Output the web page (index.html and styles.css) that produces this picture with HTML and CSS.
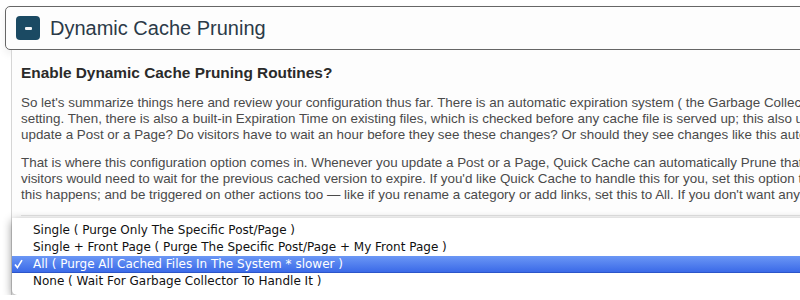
FILE: index.html
```html
<!DOCTYPE html>
<html lang="en">
<head>
    <meta charset="UTF-8">
    <title>Dynamic Cache Pruning</title>
    <link rel="stylesheet" href="styles.css">
</head>
<body>
    <div class="section">
        <div class="section-head">
            <span class="toggle"><span class="minus"></span></span>
            <span class="section-title">Dynamic Cache Pruning</span>
        </div>
        <div class="section-body">
            <h3>Enable Dynamic Cache Pruning Routines?</h3>
            <p>So let's summarize things here and review your configuration thus far. There is an automatic expiration system ( the Garbage Collector ) that runs<br>setting. Then, there is also a built-in Expiration Time on existing files, which is checked before any cache file is served up; this also uses your<br>update a Post or a Page? Do visitors have to wait an hour before they see these changes? Or should they see changes like this automatically?</p>
            <p>That is where this configuration option comes in. Whenever you update a Post or a Page, Quick Cache can automatically Prune that specific<br>visitors would need to wait for the previous cached version to expire. If you'd like Quick Cache to handle this for you, set this option to Single.<br>this happens; and be triggered on other actions too — like if you rename a category or add links, set this to All. If you don't want any of this</p>
            <hr>
            <ul class="select-menu">
                <li><span class="check"></span>Single ( Purge Only The Specific Post/Page )</li>
                <li><span class="check"></span>Single + Front Page ( Purge The Specific Post/Page + My Front Page )</li>
                <li class="selected"><span class="check"><svg width="9" height="10" viewBox="0 0 9 10"><path d="M1 5.6 L3.4 8.6 L8 1.2" fill="none" stroke="#fff" stroke-width="1.6"/></svg></span>All ( Purge All Cached Files In The System * slower )</li>
                <li><span class="check"></span>None ( Wait For Garbage Collector To Handle It )</li>
            </ul>
        </div>
    </div>
</body>
</html>
```

FILE: styles.css
```css
body{
    margin: 0;
    background: #fff;
    overflow: hidden;
    font-family: "Liberation Sans", Arial, sans-serif;
}

.section{
    width: 1100px;
    margin: 6px 0 0 5px;
}

.section-head{
    display: flex;
    align-items: center;
    gap: 10px;
    height: 42px;
    padding-left: 10px;
    background: #fdfdfd;
    border: 1px solid #666;
    border-radius: 5px;
    box-shadow: 0 4px 8px rgba(0,0,0,0.07);
}

.toggle{
    display: flex;
    align-items: center;
    justify-content: center;
    width: 24px;
    height: 24px;
    background: #1b4a63;
    border-radius: 4px;
}

.minus{
    width: 7px;
    height: 3px;
    background: #f2f4f6;
    border-radius: 1px;
}

.section-title{
    font-size: 20px;
    color: #2b3a48;
}

.section-body{
    margin-left: 6px;
    border-left: 1px solid #d6d6d6;
    padding: 14px 0 0 9px;
    background: #fdfdfd;
}

.section-body h3{
    margin: 0 0 13px;
    font-size: 15.4px;
    line-height: 18px;
    color: #2a2a2a;
}

.section-body p{
    margin: 0 0 12px;
    font-size: 13.4px;
    line-height: 16px;
    color: #4a4a4a;
    white-space: nowrap;
}

.section-body hr{
    margin: 0 0 2px;
    border: 0;
    border-top: 1px solid #e4e4e4;
}

.select-menu{
    list-style: none;
    margin: 0 0 0 -9px;
    padding: 4px 0 5px;
    background: #fff;
    border-radius: 0 0 5px 5px;
    box-shadow: 0 3px 10px rgba(0,0,0,0.45);
    font-family: "DejaVu Sans", sans-serif;
    font-size: 12px;
    color: #111;
}

.select-menu li{
    display: flex;
    align-items: center;
    height: 17px;
    line-height: 17px;
    box-sizing: border-box;
}

.check{
    display: flex;
    align-items: center;
    width: 21px;
    padding-left: 2px;
    box-sizing: border-box;
}

.select-menu .selected{
    color: #fff;
    background: linear-gradient(#6b97f5, #3b6ae8);
    border-bottom: 1px solid #2c55c9;
}
```
